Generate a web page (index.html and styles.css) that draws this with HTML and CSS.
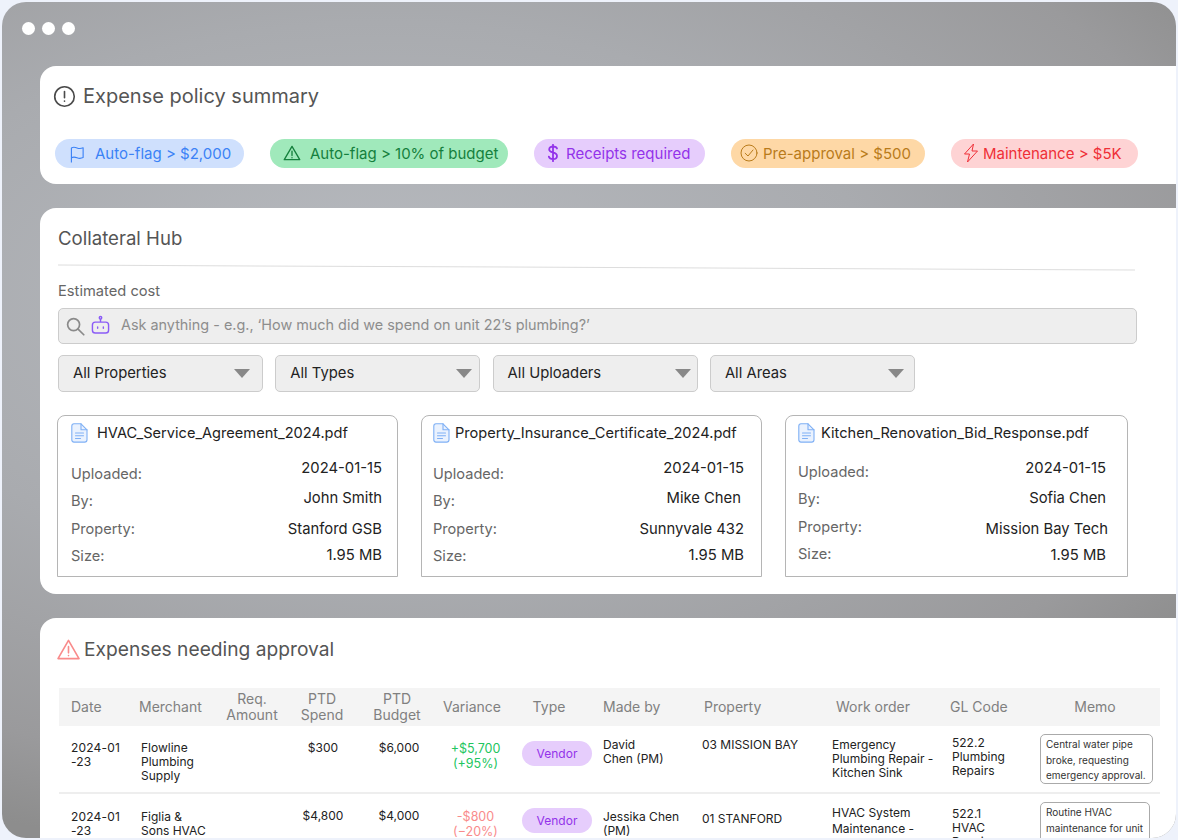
FILE: index.html
```html
<!DOCTYPE html>
<html lang="en">
<head>
<meta charset="utf-8">
<title>Expenses</title>
<link rel="stylesheet" href="styles.css">
</head>
<body>
<div class="window">
  <div class="dots"><span></span><span></span><span></span></div>

  <section class="card policy">
    <h2 class="policy-title">
      <svg class="i-title" viewBox="0 0 24 24" fill="none" stroke="#4a4a4a" stroke-width="1.7" stroke-linecap="round"><circle cx="12" cy="12" r="10.200"/><path d="M12 6.800v6.400M12 16.800v.1"/></svg>
      Expense policy summary
    </h2>
    <div class="pills">
      <div class="pill blue"><svg class="i-flag" viewBox="0 0 16 18" fill="none" stroke="currentColor" stroke-width="1.200" stroke-linejoin="round"><path d="M1.500 17.500V2c2.300-1.300 4-.8 6 0s3.800 1 6.500-.2v10.500c-2.700 1.200-4.500 1-6.500.2s-3.700-1.300-6 0"/></svg>Auto-flag &gt; $2,000</div>
      <div class="pill green"><svg class="i-warn" viewBox="0 0 20 18" fill="none" stroke="currentColor" stroke-width="1.500" stroke-linejoin="round" stroke-linecap="round"><path d="M10 1.500 18.700 16.500H1.300Z"/><path d="M10 6.800v5M10 14.200v.1"/></svg>Auto-flag &gt; 10% of budget</div>
      <div class="pill purple"><svg class="i-dollar" viewBox="0 0 10 18" fill="none" stroke="currentColor" stroke-width="1.800" stroke-linecap="round"><path d="M9 4.500C8.500 3 7 2.500 5 2.500 2.800 2.500 1.200 3.600 1.200 5.400 1.200 9.400 9 7.400 9 11.900c0 2-1.800 3.200-4 3.200-2.300 0-3.700-.8-4.200-2.500M5 .8v16.400"/></svg>Receipts required</div>
      <div class="pill orange"><svg class="i-check" viewBox="0 0 18 18" fill="none" stroke="currentColor" stroke-width="1" stroke-linecap="round" stroke-linejoin="round"><circle cx="9" cy="9" r="8"/><path d="M5.200 9.300 8 12l5-6"/></svg>Pre-approval &gt; $500</div>
      <div class="pill red"><svg class="i-bolt" viewBox="0 0 16 20" fill="none" stroke="currentColor" stroke-width="1" stroke-linejoin="round"><path d="M10.500 1 1.500 11h5L4.500 19 14.500 8h-5.500Z"/></svg>Maintenance &gt; $5K</div>
    </div>
  </section>

  <section class="card hub">
    <h2 class="hub-title">Collateral Hub</h2>
    <div class="divider"></div>
    <div class="hub-label">Estimated cost</div>
    <div class="search">
      <svg class="i-search" viewBox="0 0 20 20" fill="none" stroke="#8a8a8a" stroke-width="1.800" stroke-linecap="round"><circle cx="8" cy="8" r="6.300"/><path d="m12.700 12.700 6 6"/></svg>
      <svg class="i-robot" viewBox="0 0 20 20" fill="none" stroke="#8b5cf6" stroke-width="1.500" stroke-linejoin="round"><circle cx="10" cy="2.300" r="1.300"/><path d="M10 3.600v3.200"/><rect x="1.500" y="7" width="17" height="11.500" rx="3"/><path d="M7 12v1.500M13 12v1.500" stroke-linecap="round"/></svg>
      <span class="search-text">Ask anything - e.g., ‘How much did we spend on unit 22’s plumbing?’</span>
    </div>
    <div class="filters">
      <div class="filter">All Properties<span class="caret"></span></div>
      <div class="filter">All Types<span class="caret"></span></div>
      <div class="filter">All Uploaders<span class="caret"></span></div>
      <div class="filter">All Areas<span class="caret"></span></div>
    </div>
    <div class="files">
      <article class="file first">
        <div class="file-name"><svg class="i-doc" viewBox="0 0 17 20" fill="none" stroke="#7fb0f5" stroke-width="1.100" stroke-linecap="round" stroke-linejoin="round"><path d="M3 .8h7l6 6v10a2.300 2.300 0 0 1-2.300 2.300H3A2.300 2.300 0 0 1 .8 16.800V3A2.300 2.300 0 0 1 3 .8Z" fill="#eaf2fe"/><path d="M10 .8v6h6M4.500 10h8M4.500 12.800h8M4.500 15.500h5"/></svg>HVAC_Service_Agreement_2024.pdf</div>
        <div class="file-body">
          <div class="labels"><span>Uploaded:</span><span>By:</span><span>Property:</span><span>Size:</span></div>
          <div class="values"><span>2024-01-15</span><span>John Smith</span><span>Stanford GSB</span><span>1.95 MB</span></div>
        </div>
      </article>
      <article class="file second">
        <div class="file-name"><svg class="i-doc" viewBox="0 0 17 20" fill="none" stroke="#7fb0f5" stroke-width="1.100" stroke-linecap="round" stroke-linejoin="round"><path d="M3 .8h7l6 6v10a2.300 2.300 0 0 1-2.300 2.300H3A2.300 2.300 0 0 1 .8 16.800V3A2.300 2.300 0 0 1 3 .8Z" fill="#eaf2fe"/><path d="M10 .8v6h6M4.500 10h8M4.500 12.800h8M4.500 15.500h5"/></svg>Property_Insurance_Certificate_2024.pdf</div>
        <div class="file-body">
          <div class="labels"><span>Uploaded:</span><span>By:</span><span>Property:</span><span>Size:</span></div>
          <div class="values"><span>2024-01-15</span><span class="nudge">Mike Chen</span><span>Sunnyvale 432</span><span>1.95 MB</span></div>
        </div>
      </article>
      <article class="file third">
        <div class="file-name"><svg class="i-doc" viewBox="0 0 17 20" fill="none" stroke="#7fb0f5" stroke-width="1.100" stroke-linecap="round" stroke-linejoin="round"><path d="M3 .8h7l6 6v10a2.300 2.300 0 0 1-2.300 2.300H3A2.300 2.300 0 0 1 .8 16.800V3A2.300 2.300 0 0 1 3 .8Z" fill="#eaf2fe"/><path d="M10 .8v6h6M4.500 10h8M4.500 12.800h8M4.500 15.500h5"/></svg>Kitchen_Renovation_Bid_Response.pdf</div>
        <div class="file-body">
          <div class="labels"><span>Uploaded:</span><span>By:</span><span>Property:</span><span>Size:</span></div>
          <div class="values"><span>2024-01-15</span><span>Sofia Chen</span><span class="out">Mission Bay Tech</span><span>1.95 MB</span></div>
        </div>
      </article>
    </div>
  </section>

  <section class="card expenses">
    <h2 class="exp-title">
      <svg class="i-alert" viewBox="0 0 24 22" fill="none" stroke="#f98b8b" stroke-width="1.700" stroke-linejoin="round" stroke-linecap="round"><path d="M12 1.500 23 20.500H1Z"/><path d="M12 8v6.500M12 17.300v.1"/></svg>
      Expenses needing approval
    </h2>
    <table class="table">
      <colgroup>
        <col class="c-date"><col class="c-merchant"><col class="c-amount"><col class="c-spend"><col class="c-budget"><col class="c-var"><col class="c-type"><col class="c-by"><col class="c-prop"><col class="c-wo"><col class="c-gl"><col class="c-memo">
      </colgroup>
      <thead>
        <tr>
          <th class="left date-h">Date</th><th class="left">Merchant</th><th>Req.<br>Amount</th><th>PTD<br>Spend</th><th>PTD<br>Budget</th><th>Variance</th><th class="type-h">Type</th><th class="left">Made by</th><th class="left prop-h">Property</th><th class="left wo-h">Work order</th><th class="left">GL Code</th><th>Memo</th>
        </tr>
      </thead>
      <tbody>
        <tr class="row-a">
          <td class="date">2024-01<br>-23</td>
          <td class="merchant">Flowline<br>Plumbing<br>Supply</td>
          <td></td>
          <td class="num spend">$300</td>
          <td class="num budget">$6,000</td>
          <td class="num var pos">+$5,700<br>(+95%)</td>
          <td class="type"><span class="vendor">Vendor</span></td>
          <td class="by">David<br>Chen (PM)</td>
          <td class="prop">03 MISSION BAY</td>
          <td class="wo">Emergency<br>Plumbing Repair -<br>Kitchen Sink</td>
          <td class="gl">522.2<br>Plumbing<br>Repairs</td>
          <td class="memo"><div class="memo-box">Central water pipe broke, requesting emergency approval.</div></td>
        </tr>
        <tr class="row-b">
          <td class="date">2024-01<br>-23</td>
          <td class="merchant">Figlia &amp;<br>Sons HVAC</td>
          <td></td>
          <td class="num spend">$4,800</td>
          <td class="num budget">$4,000</td>
          <td class="num var neg">-$800<br>(−20%)</td>
          <td class="type"><span class="vendor">Vendor</span></td>
          <td class="by">Jessika Chen<br>(PM)</td>
          <td class="prop">01 STANFORD</td>
          <td class="wo">HVAC System<br>Maintenance -<br>Annual Service</td>
          <td class="gl">522.1<br>HVAC<br>Repairs</td>
          <td class="memo"><div class="memo-box">Routine HVAC maintenance for unit 14B.</div></td>
        </tr>
      </tbody>
    </table>
  </section>
</div>
</body>
</html>
```
FILE: styles.css
```css
* { box-sizing: border-box; }
html, body { height: 100%; }
body {
  margin: 0;
  padding: 2px;
  background: #eef2fb;
  font-family: Inter, "Liberation Sans", sans-serif;
  overflow: hidden;
}
h2 { margin: 0; font-weight: 400; }

.window {
  width: 1174px;
  height: 836px;
  border-radius: 24px;
  overflow: hidden;
  background: radial-gradient(1000px 560px at 380px 300px, #b8bbc0 0%, #a9abaf 50%, #9a9a9c 85%, #8d8d8d 100%);
  padding: 20px 0 0 38px;
}
.dots { display: flex; gap: 7px; height: 44px; margin-left: -18px; }
.dots span { width: 13px; height: 13px; border-radius: 50%; background: #fff; }

.card {
  background: #fff;
  border-radius: 16px 0 0 16px;
  margin-bottom: 24px;
}

/* policy */
.policy { height: 118px; padding: 18px 0 0 13px; }
.policy-title { display: flex; align-items: center; gap: 7px; font-size: 20px; line-height: 24px; color: #555; }
.i-title { width: 23px; height: 23px; }
.pills { display: flex; gap: 26px; margin: 31px 0 0 2px; }
.pill { display: flex; align-items: center; height: 29px; padding-bottom: 1px; border-radius: 15px; font-size: 15px; white-space: nowrap; }
.blue { width: 189px; background: #cfe0fd; color: #3b82f6; padding-left: 15px; gap: 10px; }
.green { width: 238px; background: #a0e9bb; color: #15803d; padding-left: 13px; gap: 9px; }
.purple { width: 171px; background: #e6cdfc; color: #9333ea; padding-left: 14px; gap: 7px; }
.orange { width: 194px; background: #fed8a6; color: #b97b1a; padding-left: 9px; gap: 5px; }
.red { width: 187px; background: #fed3d4; color: #ef2f37; padding-left: 12px; gap: 4px; }
.i-flag { width: 15px; height: 17px; margin-top: 2px; }
.i-warn { width: 18px; height: 16px; }
.i-dollar { width: 10px; height: 18px; margin-right: 1px; }
.i-check { width: 18px; height: 18px; }
.i-bolt { width: 16px; height: 20px; }

/* hub */
.hub { height: 386px; padding: 19px 0 0 18px; }
.hub-title { font-size: 18.600px; line-height: 22px; color: #555; }
.divider { width: 1077px; height: 1px; background: #ddd; margin-top: 18px; transform: rotate(.26deg); }
.hub-label { font-size: 14.700px; line-height: 17px; color: #666; margin-top: 15px; }
.search {
  display: flex; align-items: center; width: 1079px; height: 36px; margin-top: 8px; padding-left: 7px;
  background: #eee; border: 1px solid #ccc; border-radius: 5px;
}
.i-search { width: 19px; height: 19px; }
.i-robot { width: 19px; height: 20px; margin: -2px 0 0 6px; }
.search-text { margin: -3px 0 0 11px; font-size: 14.400px; color: #8d8d8d; white-space: nowrap; }
.filters { display: flex; gap: 12.300px; margin-top: 11px; }
.filter {
  display: flex; align-items: center; justify-content: space-between; width: 205px; height: 37px; padding: 0 0 2px 14px;
  background: #eee; border: 1px solid #ccc; border-radius: 5px; font-size: 14.800px; color: #222;
}
.caret { width: 0; height: 0; border-left: 8.500px solid transparent; border-right: 8.500px solid transparent; border-top: 9px solid #888; margin: 2px 12px 0 0; }
.filter:nth-child(2) .caret { margin-right: 7px; }
.filter:nth-child(3) .caret { margin-right: 6px; }
.filter:nth-child(4) .caret { margin-right: 10px; }
.files { display: flex; gap: 23px; margin: 23px 0 0 -1px; }
.file { width: 341px; height: 162px; border: 1px solid #b5b5b5; border-radius: 8px 8px 0 0; }
.first { padding: 0 15px 0 13px; }
.second { padding: 0 17px 0 11px; }
.third { width: 343px; padding: 0 21px 0 12px; }
.file-name { display: flex; align-items: center; gap: 9px; height: 32px; padding-top: 2px; font-size: 14.600px; color: #222; white-space: nowrap; }
.second .file-name { gap: 5px; }
.third .file-name { gap: 6px; }
.i-doc { width: 17px; height: 20px; flex: none; }
.file-body { display: flex; justify-content: space-between; }
.labels, .values { display: flex; flex-direction: column; color: #666; }
.labels { padding-top: 18px; font-size: 14.600px; }
.labels span { height: 27.300px; line-height: 17px; }
.values { align-items: flex-end; padding-top: 12px; color: #222; font-size: 14.800px; }
.values span { line-height: 17px; }
.values span:nth-child(1) { height: 30px; }
.values span:nth-child(2) { height: 31px; }
.values span:nth-child(3) { height: 26px; }
.values span:nth-child(4) { height: 17px; }
.nudge { margin-right: 3px; }
.out { margin-right: -2px; }
.third .labels { padding-top: 16px; }

/* expenses */
.expenses { padding: 19px 0 0 17px; height: 300px; }
.exp-title { display: flex; align-items: center; gap: 4px; font-size: 19.200px; line-height: 24px; color: #555; }
.i-alert { width: 23px; height: 21px; }
.table { table-layout: fixed; border-collapse: collapse; width: 1101px; margin: 27px 0 0 2px; font-size: 12px; color: #222; }
.c-date { width: 74px; } .c-merchant { width: 84px; } .c-amount { width: 70px; } .c-spend { width: 70px; }
.c-budget { width: 80px; } .c-var { width: 70px; } .c-type { width: 90px; } .c-by { width: 100px; }
.c-prop { width: 129px; } .c-wo { width: 118px; } .c-gl { width: 86px; } .c-memo { width: 130px; }
th { height: 38px; padding: 0; background: #f4f4f4; font-size: 14px; font-weight: 400; line-height: 16px; color: #808080; text-align: center; }
th.left { text-align: left; padding-left: 6px; }
th.date-h { padding-left: 12px; }
th.type-h { padding-right: 6px; }
th.prop-h { padding-left: 7px; }
th.wo-h { padding-left: 10px; }
td { vertical-align: top; padding: 15px 0 0; line-height: 14px; }
.row-a td { height: 67px; border-bottom: 2px solid #eee; }
.date { padding-left: 12px; letter-spacing: .2px; }
.merchant { padding-left: 8px; }
.num { text-align: center; }
.spend { padding-left: 2px; }
.budget { padding-left: 4px; }
.var { padding-left: 7px; font-size: 12.500px; line-height: 15px; }
.pos { color: #22c55e; }
.neg { color: #f98b8b; }
.type { padding: 15px 0 0 15px; }
.vendor { display: block; width: 70px; height: 25px; line-height: 25px; text-align: center; border-radius: 12.500px; background: #e6cdfc; color: #9333ea; }
.by { padding: 12px 0 0 6px; }
.prop { padding: 12px 0 0 5px; }
.wo { padding: 12px 0 0 6px; }
.gl { padding: 10px 0 0 8px; }
.memo { padding: 8px 0 0 10px; }
.memo-box { width: 113px; height: 50px; padding: 2px 3px 0 5px; border: 1px solid #aaa; border-radius: 5px; font-size: 10px; line-height: 15.500px; color: #333; }
.row-b td { height: 60px; }
.row-b .date, .row-b .merchant { padding-top: 16px; }
.row-b .type { padding-top: 14px; }
.row-b .by { padding-top: 16px; }
.row-b .prop { padding-top: 18px; }
.row-b .wo { line-height: 16px; padding-top: 11px; }
.row-b .gl { padding-top: 13px; }
.row-b .memo-box { width: 110px; }
```
